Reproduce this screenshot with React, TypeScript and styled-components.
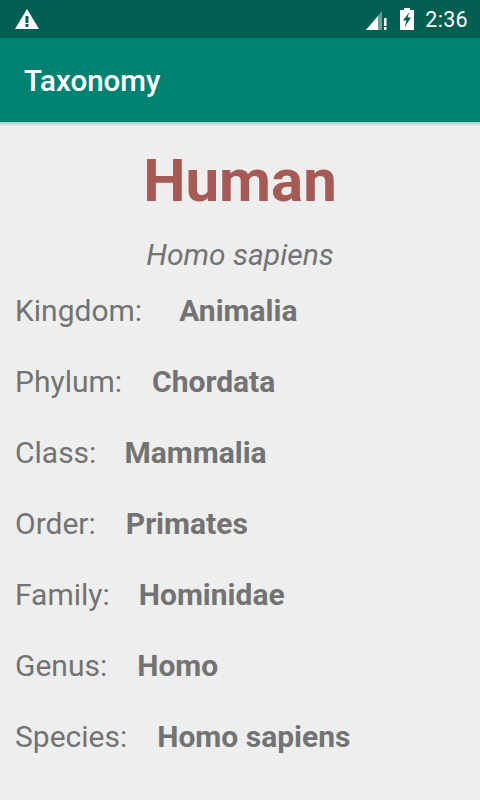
import React from "react";
import styled, { createGlobalStyle } from "styled-components";

const GlobalStyle = createGlobalStyle`
  html, body {
    margin: 0;
    padding: 0;
    background: #eeeeee;
  }
  body {
    font-family: Roboto, "Liberation Sans", sans-serif;
  }
`;

const Page = styled.div`
  width: 480px;
  height: 800px;
  overflow: hidden;
  display: flex;
  flex-direction: column;
  background: #eeeeee;
`;

const StatusBar = styled.div`
  height: 38px;
  flex: none;
  display: flex;
  align-items: center;
  justify-content: space-between;
  padding: 0 12px 0 15px;
  background: #005f50;
  color: #ffffff;
`;

const StatusRight = styled.div`
  display: flex;
  align-items: center;
`;

const Clock = styled.span`
  font-size: 21.5px;
  margin-left: 11px;
  letter-spacing: 0.3px;
`;

const AppBar = styled.div`
  height: 84px;
  flex: none;
  display: flex;
  align-items: center;
  padding: 2px 0 0 24px;
  box-sizing: border-box;
  background: #008272;
  color: #ffffff;
  font-size: 29.5px;
  font-weight: 500;
`;

const Shadow = styled.div`
  height: 4px;
  flex: none;
  background: linear-gradient(#a9cdc7, #e4e9e8);
`;

const Content = styled.div`
  display: flex;
  flex-direction: column;
  color: #737373;
`;

const Title = styled.h1`
  margin: 16px 0 0;
  height: 78px;
  line-height: 78px;
  text-align: center;
  font-size: 60px;
  font-weight: 700;
  color: #a65a55;
`;

const Latin = styled.div`
  margin-top: 17px;
  height: 36px;
  line-height: 36px;
  text-align: center;
  font-size: 30px;
  font-style: italic;
`;

const Rows = styled.div`
  display: flex;
  flex-direction: column;
  padding: 2px 0 0 15px;
`;

const Row = styled.div`
  height: 71px;
  display: flex;
  align-items: center;
  font-size: 30px;
`;

const Label = styled.span<{ $gap: number }>`
  margin-right: ${(p) => p.$gap}px;
`;

const Value = styled.span`
  font-weight: 700;
`;

const SignalIcon = styled.svg`
  margin-top: 1px;
`;

const BatteryIcon = styled.svg`
  margin-left: 13px;
`;

const ranks: [string, string, number][] = [
  ["Kingdom:", "Animalia", 37],
  ["Phylum:", "Chordata", 30],
  ["Class:", "Mammalia", 28],
  ["Order:", "Primates", 30],
  ["Family:", "Hominidae", 29],
  ["Genus:", "Homo", 30],
  ["Species:", "Homo sapiens", 30],
];

const App = () => {
  return (
    <Page>
      <GlobalStyle />
      <StatusBar>
        <svg width="24" height="22" viewBox="0 0 24 22">
          <path d="M12 1 L24 21 H0 Z" fill="#fff" />
          <rect x="10.5" y="8" width="3" height="7" fill="#005f50" />
          <rect x="10.5" y="16" width="3" height="3" fill="#005f50" />
        </svg>
        <StatusRight>
          <SignalIcon width="21" height="20" viewBox="0 0 21 20">
            <path d="M0 20 L16 1 V20 Z" fill="#fff" opacity="0.4" />
            <path d="M0 20 L12 6 V20 Z" fill="#fff" />
            <rect x="18" y="8" width="2.5" height="8" fill="#fff" />
            <rect x="18" y="17" width="2.5" height="3" fill="#fff" />
          </SignalIcon>
          <BatteryIcon width="14" height="22" viewBox="0 0 14 22">
            <path d="M4 0 H10 V2 H14 V22 H0 V2 H4 Z" fill="#fff" />
            <path d="M9.5 4 L3 12.5 H6.5 L4.5 19.5 L11 9.5 H7.5 Z" fill="#005f50" />
          </BatteryIcon>
          <Clock>2:36</Clock>
        </StatusRight>
      </StatusBar>
      <AppBar>Taxonomy</AppBar>
      <Shadow />
      <Content>
        <Title>Human</Title>
        <Latin>Homo sapiens</Latin>
        <Rows>
          {ranks.map(([label, value, gap]) => (
            <Row key={label}>
              <Label $gap={gap}>{label}</Label>
              <Value>{value}</Value>
            </Row>
          ))}
        </Rows>
      </Content>
    </Page>
  );
};

export default App;
